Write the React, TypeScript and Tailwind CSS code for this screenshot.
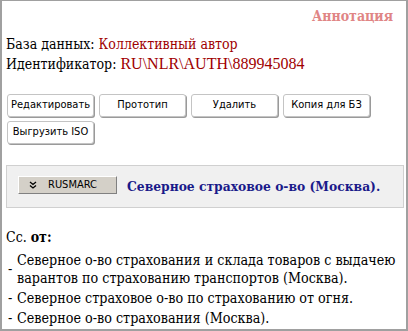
import React from "react";

function Btn({ label }: { label: string }) {
  return (
    <button className="w-[87px] h-[23px] rounded-[3px] border border-[#c4c4c4] bg-white text-[11px] text-black shadow-[1px_1px_0_#9a9a9a] flex items-center justify-center whitespace-nowrap font-['DejaVu_Sans_Condensed',sans-serif]">
      {label}
    </button>
  );
}

export default function App() {
  const items = [
    "Северное о-во страхования и склада товаров с выдачею варантов по страхованию транспортов (Москва).",
    "Северное страховое о-во по страхованию от огня.",
    "Северное о-во страхования (Москва).",
  ];
  return (
    <div className="w-[408px] h-[331px] bg-white border-l-2 border-r-2 border-b-2 border-t border-[#a0a0a0] overflow-hidden text-black font-['DejaVu_Serif_Condensed',serif]">
      <div className="flex flex-col pl-[4px]">
        <div className="flex justify-end pr-[13px] pt-[6px] h-[34px] text-[14px] leading-[18px] font-bold text-[#e08585]">
          Аннотация
        </div>
        <div className="text-[14px] leading-[19px]">
          База данных: <span className="text-[#a00000]">Коллективный автор</span>
        </div>
        <div className="text-[14px] leading-[19px]">
          Идентификатор:{" "}
          <span className="text-[#a00000] text-[16px] font-['Liberation_Serif',serif]">RU\NLR\AUTH\889945084</span>
        </div>
        <div className="mt-[20px] pl-[1px] flex flex-wrap gap-x-[5px] gap-y-[4px] w-[380px]">
          <Btn label="Редактировать" />
          <Btn label="Прототип" />
          <Btn label="Удалить" />
          <Btn label="Копия для БЗ" />
          <Btn label="Выгрузить ISO" />
        </div>
        <div className="mt-[21px] w-[398px] h-[43px] bg-[#f0f0f0] border border-[#d0d0d0] flex items-center pl-[11px]">
          <div className="w-[99px] h-[18px] bg-[#d4d0c8] border border-t-white border-l-white border-b-[#808080] border-r-[#808080] flex items-center text-[11px] text-black mt-[-3px] font-['DejaVu_Sans_Condensed',sans-serif]">
            <svg width="8" height="8" viewBox="0 0 8 8" className="ml-[10px]">
              <path d="M1 1 L4 3.5 L7 1 M1 4.5 L4 7 L7 4.5" stroke="black" strokeWidth="1.3" fill="none" />
            </svg>
            <span className="ml-[11px]">RUSMARC</span>
          </div>
          <div className="ml-[10px] text-[13.7px] font-bold text-[#1a1a8a]">
            Северное страховое о-во (Москва).
          </div>
        </div>
        <div className="mt-[20px] text-[14px] leading-[19px]">
          Сс. <span className="font-bold">от:</span>
        </div>
        <div className="mt-[3px] flex flex-col">
          {items.map((t, i) => (
            <div key={i} className="flex items-center text-[14.2px] leading-[18px] py-[1px]">
              <span className="w-[11px] pl-[2px] shrink-0">-</span>
              <span className="w-[388px]">{t}</span>
            </div>
          ))}
        </div>
      </div>
    </div>
  );
}
